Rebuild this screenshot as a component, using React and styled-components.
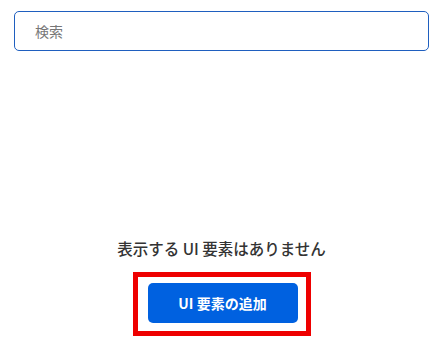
import React from 'react';
import styled, { createGlobalStyle } from 'styled-components';

const GlobalStyle = createGlobalStyle`
  html, body {
    margin: 0;
    padding: 0;
    background: #ffffff;
  }
  body {
    font-family: "Noto Sans CJK JP", "Noto Sans", sans-serif;
  }
`;

const Page = styled.div`
  box-sizing: border-box;
  height: 356px;
  display: flex;
  flex-direction: column;
  padding: 11px 12px 20px 14px;
`;

const SearchInput = styled.input`
  box-sizing: border-box;
  width: 100%;
  height: 40px;
  padding: 0 20px;
  border: 1px solid #1f5fbf;
  border-radius: 5px;
  outline: none;
  font-family: "Noto Sans CJK JP", "Noto Sans", sans-serif;
  font-size: 14px;
  color: #222;
  caret-color: #000;

  &::placeholder {
    color: #777;
  }
`;

const EmptyState = styled.div`
  margin-top: auto;
  display: flex;
  flex-direction: column;
  align-items: center;
  gap: 12px;
`;

const EmptyText = styled.div`
  font-size: 15.5px;
  font-weight: 500;
  color: #333;
  line-height: 24px;
`;

const Highlight = styled.div`
  border: 5px solid #ee0000;
  padding: 6px 8px 8px 10px;
`;

const AddButton = styled.button`
  width: 150px;
  height: 40px;
  border: none;
  border-radius: 5px;
  background: #0061e0;
  color: #fff;
  font-family: "Noto Sans CJK JP", "Noto Sans", sans-serif;
  font-size: 14px;
  font-weight: 700;
  cursor: pointer;
`;

export default function App() {
  return (
    <>
      <GlobalStyle />
      <Page>
        <SearchInput placeholder="検索" autoFocus />
        <EmptyState>
          <EmptyText>表示する UI 要素はありません</EmptyText>
          <Highlight>
            <AddButton>UI 要素の追加</AddButton>
          </Highlight>
        </EmptyState>
      </Page>
    </>
  );
}
